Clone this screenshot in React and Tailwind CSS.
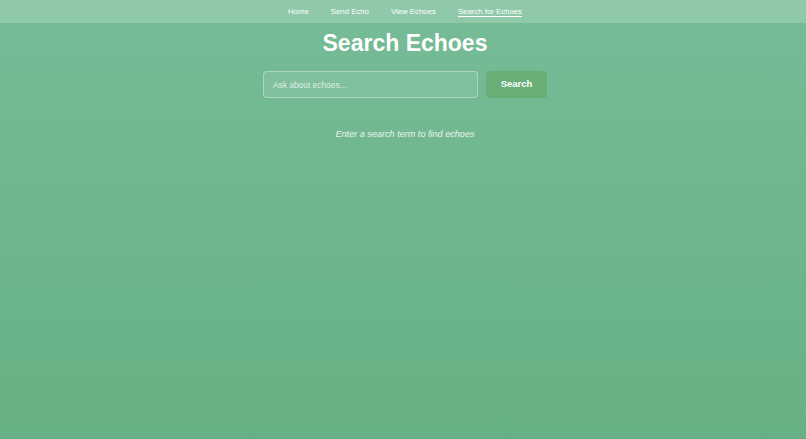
import React, { useState } from 'react';

const links = ['Home', 'Send Echo', 'View Echoes', 'Search for Echoes'];

export default function App() {
  const [query, setQuery] = useState('');

  return (
    <div className="min-h-[439px] pl-[4px] bg-gradient-to-b from-[#76bc97] to-[#67b083] font-['Liberation_Sans',Arial,sans-serif] text-white">
      {/* Nav */}
      <nav className="-ml-[4px] pl-[4px] h-[23px] bg-[#8fc9a9] flex items-center justify-center gap-[22px] text-[7.8px]">
        {links.map((l) => (
          <a key={l} href="#" className={l === 'Search for Echoes' ? 'underline underline-offset-2' : ''}>
            {l}
          </a>
        ))}
      </nav>

      <div className="flex flex-col items-center">
        <h1 className="mt-[6px] text-[23px] leading-[28px] font-bold">Search Echoes</h1>

        {/* Search bar */}
        <div className="mt-[14px] flex gap-[8px]">
          <input
            type="text"
            value={query}
            onChange={(e) => setQuery(e.target.value)}
            placeholder="Ask about echoes..."
            className="w-[215px] h-[27px] rounded-[4px] border border-white/35 bg-white/10 px-[9px] text-[8.4px] text-white placeholder:text-white/75 outline-none"
          />
          <button className="w-[61px] h-[27px] rounded-[4px] bg-[#69ae77] text-[9.5px] font-bold">
            Search
          </button>
        </div>

        <p className="mt-[30px] text-[9.1px] italic text-white/85">Enter a search term to find echoes</p>
      </div>
    </div>
  );
}
